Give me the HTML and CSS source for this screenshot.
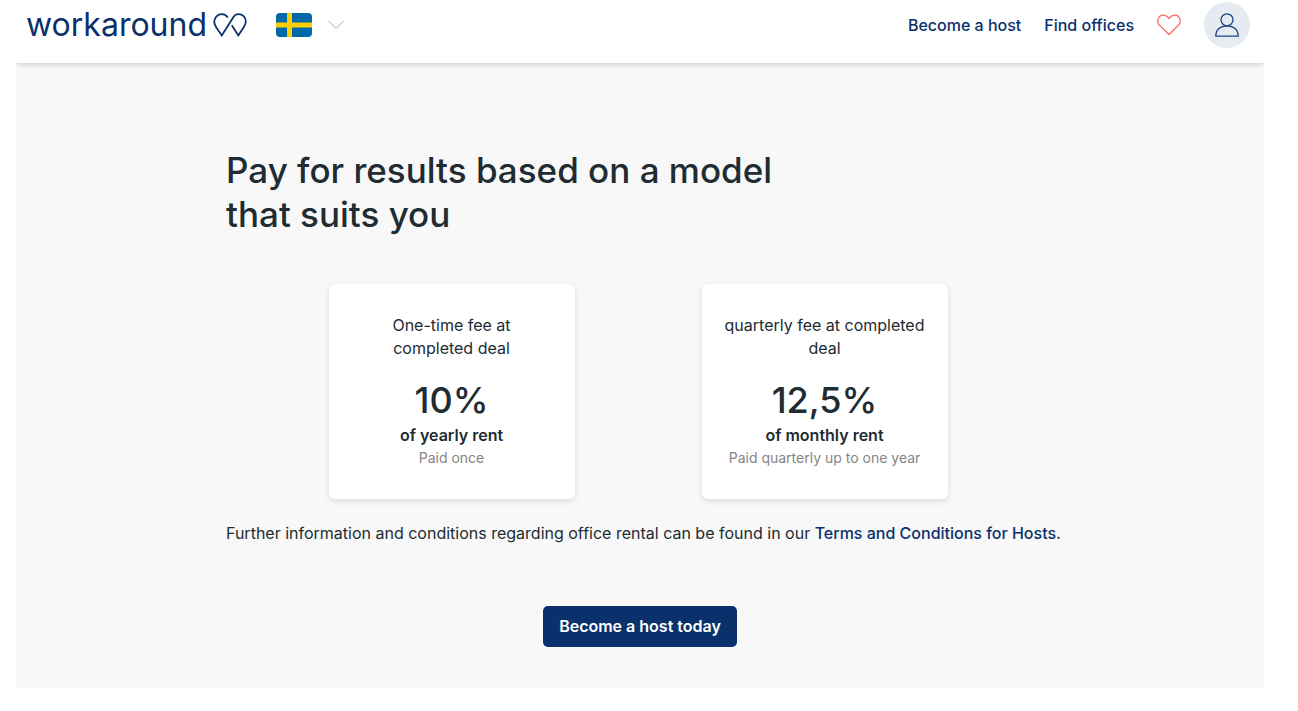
FILE: index.html
```html
<!DOCTYPE html>
<html lang="en">
<head>
<meta charset="utf-8">
<meta name="viewport" content="width=device-width, initial-scale=1">
<title>workaround – Pricing</title>
<link rel="stylesheet" href="styles.css">
</head>
<body class="page">
<header class="header">
  <a class="logo" href="#">
    <span class="logo-text">workaround</span>
    <svg class="logo-mark" viewBox="0 0 34 24" width="34" height="24" fill="none" aria-hidden="true">
      <path d="M14.800 4.600C13.300 2.200 11.300 1.100 9 1.100C4.700 1.100 1.200 4.500 1.200 8.700C1.200 11 2.200 12.600 3.500 14.700L8.800 22.400L19.200 6C20.800 2.900 22.900 1.100 25.500 1.100C29.600 1.100 32.800 4.300 32.800 8.400C32.800 10.500 32 12.200 30.700 14.300L25.300 22.400L18.800 12.200" stroke="currentColor" stroke-width="1.800"/>
    </svg>
  </a>
  <button class="language" type="button" aria-label="Choose country">
    <svg width="36" height="24" viewBox="0 0 36 24" aria-hidden="true">
      <rect width="36" height="24" rx="4" fill="#0069a8"/>
      <path d="M11 0h5v24h-5zM0 9.500h36v5H0z" fill="#ffcd00"/>
    </svg>
    <svg class="chevron" width="16" height="10" viewBox="0 0 16 10" fill="none" aria-hidden="true">
      <path d="M.5 1L8 8.500L15.500 1" stroke="#aaa"/>
    </svg>
  </button>
  <nav class="nav">
    <a class="nav-link" href="#">Become a host</a>
    <a class="nav-link" href="#">Find offices</a>
    <a class="favourites" href="#" aria-label="Favourites">
      <svg width="24" height="22" viewBox="0 0 24 22" fill="none" aria-hidden="true">
        <path d="M12 20.500L2.500 11.200C.2 8.800.1 5 2.400 2.700C4.700.4 8.200.5 10.400 2.800L12 4.500L13.600 2.800C15.800.5 19.300.4 21.600 2.700C23.900 5 23.800 8.800 21.500 11.200Z" stroke="#ff6b6b" stroke-width="1.300" stroke-linejoin="round"/>
      </svg>
    </a>
    <button class="account" type="button" aria-label="Account">
      <svg width="24" height="24" viewBox="0 0 24 24" fill="none" stroke="#1d437f" stroke-width="1.300" aria-hidden="true">
        <circle cx="12" cy="6.800" r="6"/>
        <path d="M.8 23.200C.8 16.800 5.300 12.800 12 12.800S23.200 16.800 23.200 23.200Z"/>
      </svg>
    </button>
  </nav>
</header>
<main class="pricing">
  <div class="container">
    <h1 class="title">Pay for results based on a model<br>that suits you</h1>
    <div class="plans">
      <article class="plan">
        <p class="plan-name">One-time fee at<br>completed deal</p>
        <p class="plan-rate">10%</p>
        <p class="plan-base">of yearly rent</p>
        <p class="plan-note">Paid once</p>
      </article>
      <article class="plan">
        <p class="plan-name">quarterly fee at completed<br>deal</p>
        <p class="plan-rate">12,5%</p>
        <p class="plan-base">of monthly rent</p>
        <p class="plan-note">Paid quarterly up to one year</p>
      </article>
    </div>
    <p class="terms">Further information and conditions regarding office rental can be found in our <a class="terms-link" href="#">Terms and Conditions for Hosts.</a></p>
    <button class="cta" type="button">Become a host today</button>
  </div>
</main>
</body>
</html>
```

FILE: styles.css
```css
* {
  box-sizing: border-box;
}

.page {
  margin: 0 34px 24px 16px;
  background: #fff;
  color: #212b32;
  font: 400 16px/23px Inter, sans-serif;
}

.page button {
  border: 0;
  font-family: inherit;
  cursor: pointer;
}

.page a {
  color: #0a316c;
  text-decoration: none;
}

.header {
  position: relative;
  display: flex;
  align-items: center;
  padding: 2px 14px 15px 10px;
  box-shadow: 0 1px 6px rgba(0, 0, 0, 0.2);
  clip-path: inset(0 0 -10px 0);
  background: #fff;
}

.logo {
  display: flex;
  align-items: center;
  gap: 6px;
}

.logo-text {
  font-size: 32px;
  line-height: 40px;
}

.language {
  display: flex;
  align-items: center;
  gap: 16px;
  margin-left: 29px;
  padding: 0;
  background: none;
}

.nav {
  display: flex;
  align-items: center;
  gap: 23px;
  margin-left: auto;
}

.nav-link {
  font-weight: 500;
}

.favourites {
  display: flex;
}

.account {
  display: grid;
  place-items: center;
  width: 46px;
  height: 46px;
  padding: 0;
  border-radius: 50%;
  background: #e6eaf1;
}

.pricing {
  padding: 85px 24px 41px;
  background: #f8f8f8;
}

.container {
  display: flex;
  flex-direction: column;
  max-width: 828px;
  margin: 0 auto;
}

.title {
  margin: 0;
  font-size: 35px;
  font-weight: 500;
  line-height: 44px;
}

.plans {
  display: flex;
  flex-wrap: wrap;
  justify-content: center;
  gap: 24px 127px;
  margin: 48px 4px 0 0;
}

.plan {
  width: 246px;
  padding: 30px 16px;
  border-radius: 6px;
  background: #fff;
  box-shadow: 0 2px 6px rgba(0, 0, 0, 0.12);
  text-align: center;
}

.plan p {
  margin: 0;
  white-space: nowrap;
}

.plan .plan-rate {
  margin-top: 16px;
  font-size: 36px;
  font-weight: 500;
  line-height: 48px;
}

.plan-base {
  font-weight: 600;
}

.plan-note {
  color: #858585;
  font-size: 14px;
  line-height: 22px;
}

.terms {
  margin: 23px -12px 0 0;
}

.terms-link {
  font-weight: 500;
}

.cta {
  align-self: center;
  margin-top: 61px;
  padding: 9px 16px;
  border-radius: 5px;
  background: #0a316c;
  color: #fff;
  font-size: 16px;
  font-weight: 600;
  line-height: 23px;
}
```
